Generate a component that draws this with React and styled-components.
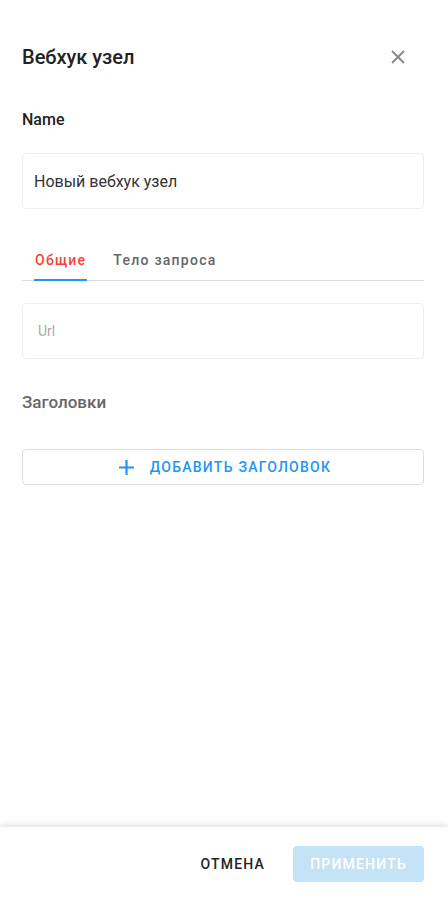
import React, { useState } from "react";
import styled, { createGlobalStyle } from "styled-components";

const Global = createGlobalStyle`
  html, body, #root { margin: 0; height: 100%; }
  body { font-family: Roboto, "Noto Sans", sans-serif; background: #fff; color: #222; }
  * { box-sizing: border-box; }
`;

const Drawer = styled.div`
  display: flex;
  flex-direction: column;
  height: 914px;
  background: #fff;
`;

const Content = styled.div`
  flex: 1;
  padding: 0 24px 0 22px;
  display: flex;
  flex-direction: column;
`;

const Header = styled.div`
  display: flex;
  align-items: center;
  justify-content: space-between;
  height: 58px;
  margin-top: 28px;
`;

const Title = styled.h2`
  margin: 0;
  font-size: 20px;
  font-weight: 500;
  color: #222;
`;

const CloseButton = styled.button`
  border: none;
  background: none;
  padding: 0;
  width: 28px;
  height: 28px;
  display: flex;
  align-items: center;
  justify-content: center;
  cursor: pointer;
  margin-right: 12px;
`;

const Label = styled.div`
  margin-top: 24px;
  font-size: 16px;
  font-weight: 500;
  color: #222;
`;

const Field = styled.div`
  margin-top: ${(p) => p.$top}px;
  height: 56px;
  border: 1px solid #efefef;
  border-radius: 4px;
  display: flex;
  align-items: center;
  padding-left: ${(p) => (p.$placeholder ? 15 : 11)}px;
  font-size: ${(p) => (p.$placeholder ? 14 : 16)}px;
  color: ${(p) => (p.$placeholder ? "#aaa" : "#333")};
`;

const Tabs = styled.div`
  margin-top: 26px;
  display: flex;
  border-bottom: 1px solid #ddd;
  height: 46px;
  padding-left: 12px;
  gap: 25px;
`;

const Tab = styled.button`
  border: none;
  background: none;
  padding: 6px 1px 0;
  font-family: inherit;
  font-size: 14px;
  font-weight: 500;
  letter-spacing: 1.25px;
  color: ${(p) => (p.$active ? "#f44336" : "#666")};
  border-bottom: 2px solid ${(p) => (p.$active ? "#2196f3" : "transparent")};
  margin-bottom: -1px;
  cursor: pointer;
`;

const Section = styled.div`
  margin-top: 33px;
  font-size: 17px;
  font-weight: 500;
  color: #666;
`;

const AddButton = styled.button`
  margin-top: 37px;
  height: 36px;
  width: 100%;
  border: 1px solid #ddd;
  border-radius: 4px;
  background: #fff;
  display: flex;
  align-items: center;
  justify-content: center;
  gap: 16px;
  padding-left: 10px;
  font-family: inherit;
  font-size: 14px;
  font-weight: 500;
  letter-spacing: 1.25px;
  color: #2196f3;
  cursor: pointer;
`;

const Footer = styled.div`
  height: 87px;
  display: flex;
  align-items: center;
  justify-content: flex-end;
  padding: 0 24px 14px;
  gap: 28px;
  box-shadow: 0 -2px 6px rgba(0, 0, 0, 0.12);
`;

const FooterButton = styled.button`
  border: none;
  border-radius: 4px;
  height: 36px;
  padding: 0 ${(p) => (p.$primary ? 17 : 0)}px;
  min-width: ${(p) => (p.$primary ? 131 : 0)}px;
  background: ${(p) => (p.$primary ? "#c5e3f6" : "transparent")};
  color: ${(p) => (p.$primary ? "#fff" : "#222")};
  font-family: inherit;
  font-size: 14px;
  font-weight: 500;
  letter-spacing: 1.2px;
`;

export default function App() {
  const [tab, setTab] = useState(0);
  return (
    <>
      <Global />
      <Drawer>
        <Content>
          <Header>
            <Title>Вебхук узел</Title>
            <CloseButton aria-label="close">
              <svg width="14" height="14" viewBox="0 0 14 14">
                <path d="M1 1L13 13M13 1L1 13" stroke="#888" strokeWidth="1.9" />
              </svg>
            </CloseButton>
          </Header>
          <Label>Name</Label>
          <Field $top={24}>Новый вебхук узел</Field>
          <Tabs>
            <Tab $active={tab === 0} onClick={() => setTab(0)}>Общие</Tab>
            <Tab $active={tab === 1} onClick={() => setTab(1)}>Тело запроса</Tab>
          </Tabs>
          <Field $top={22} $placeholder>Url</Field>
          <Section>Заголовки</Section>
          <AddButton>
            <svg width="15" height="15" viewBox="0 0 15 15">
              <path d="M7.5 0V15M0 7.5H15" stroke="#2196f3" strokeWidth="2.2" />
            </svg>
            ДОБАВИТЬ ЗАГОЛОВОК
          </AddButton>
        </Content>
        <Footer>
          <FooterButton>ОТМЕНА</FooterButton>
          <FooterButton $primary>ПРИМЕНИТЬ</FooterButton>
        </Footer>
      </Drawer>
    </>
  );
}
